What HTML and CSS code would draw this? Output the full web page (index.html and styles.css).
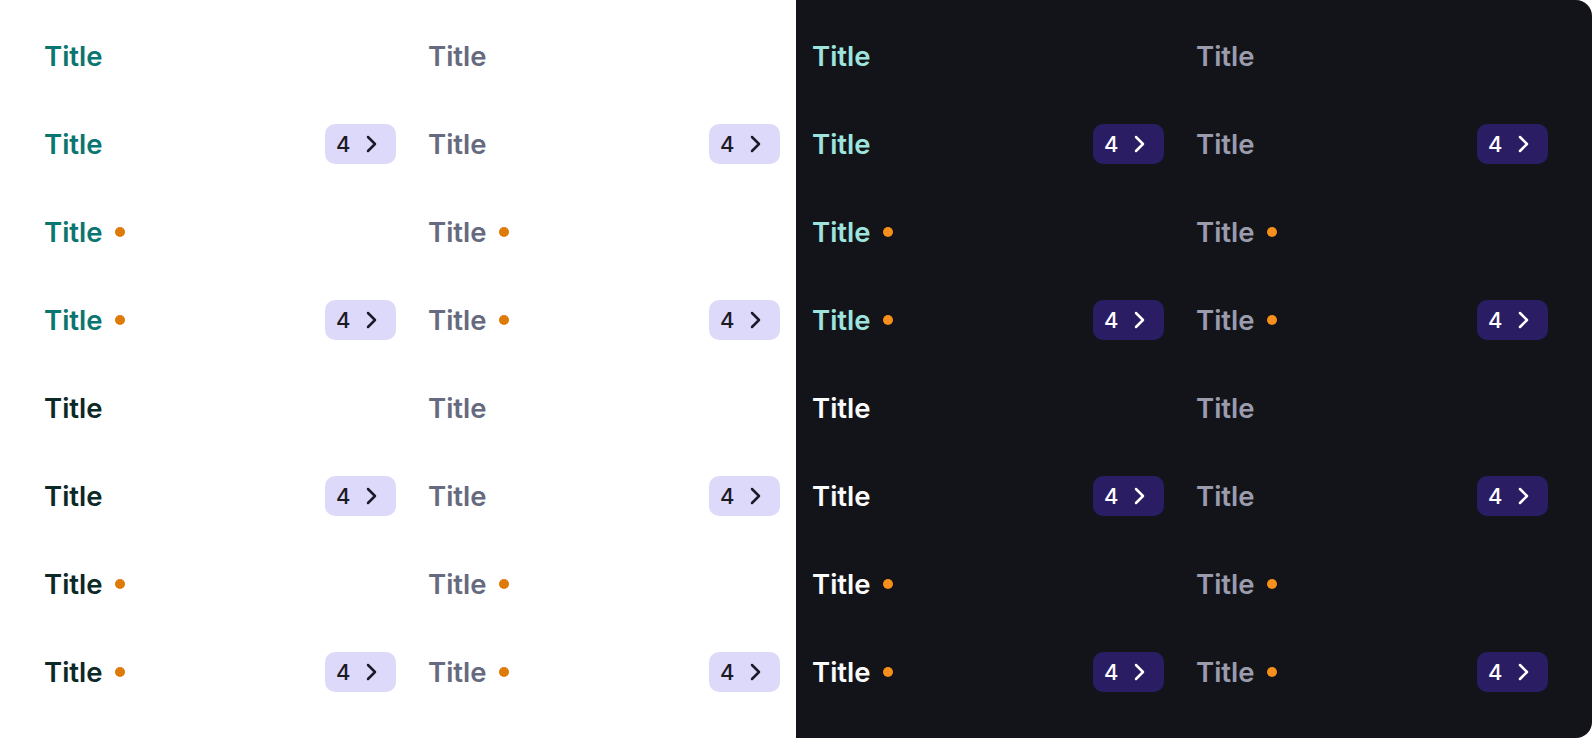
FILE: index.html
```html
<!DOCTYPE html>
<html>
<head>
<meta charset="utf-8">
<link rel="stylesheet" href="styles.css">
</head>
<body>
<div class="board">
  <section class="panel light">
    <div class="grid">
      <div class="item"><span class="lead"><span class="title teal">Title</span></span></div>
      <div class="item"><span class="lead"><span class="title gray">Title</span></span></div>

      <div class="item"><span class="lead"><span class="title teal">Title</span></span><span class="badge"><span class="num">4</span><svg class="chev" viewBox="0 0 24 24"><path d="M9 5l7 7-7 7"/></svg></span></div>
      <div class="item"><span class="lead"><span class="title gray">Title</span></span><span class="badge"><span class="num">4</span><svg class="chev" viewBox="0 0 24 24"><path d="M9 5l7 7-7 7"/></svg></span></div>

      <div class="item"><span class="lead"><span class="title teal">Title</span><span class="dot"></span></span></div>
      <div class="item"><span class="lead"><span class="title gray">Title</span><span class="dot"></span></span></div>

      <div class="item"><span class="lead"><span class="title teal">Title</span><span class="dot"></span></span><span class="badge"><span class="num">4</span><svg class="chev" viewBox="0 0 24 24"><path d="M9 5l7 7-7 7"/></svg></span></div>
      <div class="item"><span class="lead"><span class="title gray">Title</span><span class="dot"></span></span><span class="badge"><span class="num">4</span><svg class="chev" viewBox="0 0 24 24"><path d="M9 5l7 7-7 7"/></svg></span></div>

      <div class="item"><span class="lead"><span class="title ink">Title</span></span></div>
      <div class="item"><span class="lead"><span class="title gray">Title</span></span></div>

      <div class="item"><span class="lead"><span class="title ink">Title</span></span><span class="badge"><span class="num">4</span><svg class="chev" viewBox="0 0 24 24"><path d="M9 5l7 7-7 7"/></svg></span></div>
      <div class="item"><span class="lead"><span class="title gray">Title</span></span><span class="badge"><span class="num">4</span><svg class="chev" viewBox="0 0 24 24"><path d="M9 5l7 7-7 7"/></svg></span></div>

      <div class="item"><span class="lead"><span class="title ink">Title</span><span class="dot"></span></span></div>
      <div class="item"><span class="lead"><span class="title gray">Title</span><span class="dot"></span></span></div>

      <div class="item"><span class="lead"><span class="title ink">Title</span><span class="dot"></span></span><span class="badge"><span class="num">4</span><svg class="chev" viewBox="0 0 24 24"><path d="M9 5l7 7-7 7"/></svg></span></div>
      <div class="item"><span class="lead"><span class="title gray">Title</span><span class="dot"></span></span><span class="badge"><span class="num">4</span><svg class="chev" viewBox="0 0 24 24"><path d="M9 5l7 7-7 7"/></svg></span></div>
    </div>
  </section>
  <section class="panel dark">
    <div class="grid">
      <div class="item"><span class="lead"><span class="title teal">Title</span></span></div>
      <div class="item"><span class="lead"><span class="title gray">Title</span></span></div>

      <div class="item"><span class="lead"><span class="title teal">Title</span></span><span class="badge"><span class="num">4</span><svg class="chev" viewBox="0 0 24 24"><path d="M9 5l7 7-7 7"/></svg></span></div>
      <div class="item"><span class="lead"><span class="title gray">Title</span></span><span class="badge"><span class="num">4</span><svg class="chev" viewBox="0 0 24 24"><path d="M9 5l7 7-7 7"/></svg></span></div>

      <div class="item"><span class="lead"><span class="title teal">Title</span><span class="dot"></span></span></div>
      <div class="item"><span class="lead"><span class="title gray">Title</span><span class="dot"></span></span></div>

      <div class="item"><span class="lead"><span class="title teal">Title</span><span class="dot"></span></span><span class="badge"><span class="num">4</span><svg class="chev" viewBox="0 0 24 24"><path d="M9 5l7 7-7 7"/></svg></span></div>
      <div class="item"><span class="lead"><span class="title gray">Title</span><span class="dot"></span></span><span class="badge"><span class="num">4</span><svg class="chev" viewBox="0 0 24 24"><path d="M9 5l7 7-7 7"/></svg></span></div>

      <div class="item"><span class="lead"><span class="title ink">Title</span></span></div>
      <div class="item"><span class="lead"><span class="title gray">Title</span></span></div>

      <div class="item"><span class="lead"><span class="title ink">Title</span></span><span class="badge"><span class="num">4</span><svg class="chev" viewBox="0 0 24 24"><path d="M9 5l7 7-7 7"/></svg></span></div>
      <div class="item"><span class="lead"><span class="title gray">Title</span></span><span class="badge"><span class="num">4</span><svg class="chev" viewBox="0 0 24 24"><path d="M9 5l7 7-7 7"/></svg></span></div>

      <div class="item"><span class="lead"><span class="title ink">Title</span><span class="dot"></span></span></div>
      <div class="item"><span class="lead"><span class="title gray">Title</span><span class="dot"></span></span></div>

      <div class="item"><span class="lead"><span class="title ink">Title</span><span class="dot"></span></span><span class="badge"><span class="num">4</span><svg class="chev" viewBox="0 0 24 24"><path d="M9 5l7 7-7 7"/></svg></span></div>
      <div class="item"><span class="lead"><span class="title gray">Title</span><span class="dot"></span></span><span class="badge"><span class="num">4</span><svg class="chev" viewBox="0 0 24 24"><path d="M9 5l7 7-7 7"/></svg></span></div>
    </div>
  </section>
</div>
</body>
</html>
```

FILE: styles.css
```css
html, body {
  margin: 0;
  padding: 0;
  background: #ffffff;
}
body {
  font-family: "Inter", "Noto Sans", sans-serif;
}
.board {
  display: flex;
  width: 1592px;
  height: 738px;
}
.panel {
  width: 796px;
  height: 738px;
  box-sizing: border-box;
  padding-top: 36px;
}
.panel.light {
  background: #ffffff;
  padding-left: 44px;
  padding-right: 16px;
}
.panel.dark {
  background: #131419;
  padding-left: 16px;
  padding-right: 44px;
  border-radius: 0 16px 16px 0;
}
.grid {
  display: grid;
  grid-template-columns: 352px 352px;
  grid-auto-rows: 40px;
  column-gap: 32px;
  row-gap: 48px;
}
.item {
  display: flex;
  align-items: center;
  justify-content: space-between;
}
.lead {
  display: flex;
  align-items: center;
  gap: 12px;
}
.title {
  font-size: 27.5px;
  font-weight: 600;
  line-height: 32px;
}
.dot {
  width: 10px;
  height: 10px;
  border-radius: 50%;
}
.badge {
  display: flex;
  align-items: center;
  height: 40px;
  width: 71px;
  box-sizing: border-box;
  padding: 0 12px 0 11px;
  gap: 9px;
  border-radius: 10px;
}
.num {
  font-size: 22px;
  font-weight: 500;
  line-height: 24px;
}
.chev {
  width: 24px;
  height: 24px;
  fill: none;
  stroke-width: 2.5;
  stroke-linecap: round;
  stroke-linejoin: round;
}

/* light theme */
.light .teal { color: #0b7571; }
.light .gray { color: #666a80; }
.light .ink { color: #0a2927; }
.light .dot { background: #de7a0a; }
.light .badge { background: #ddd9fb; color: #1b1b26; }
.light .chev { stroke: #1b1b26; }

/* dark theme */
.dark .teal { color: #9de4de; }
.dark .gray { color: #9a9cae; }
.dark .ink { color: #fbfbfd; }
.dark .dot { background: #f78f1c; }
.dark .badge { background: #2b1d63; color: #ffffff; }
.dark .chev { stroke: #ffffff; }
```
